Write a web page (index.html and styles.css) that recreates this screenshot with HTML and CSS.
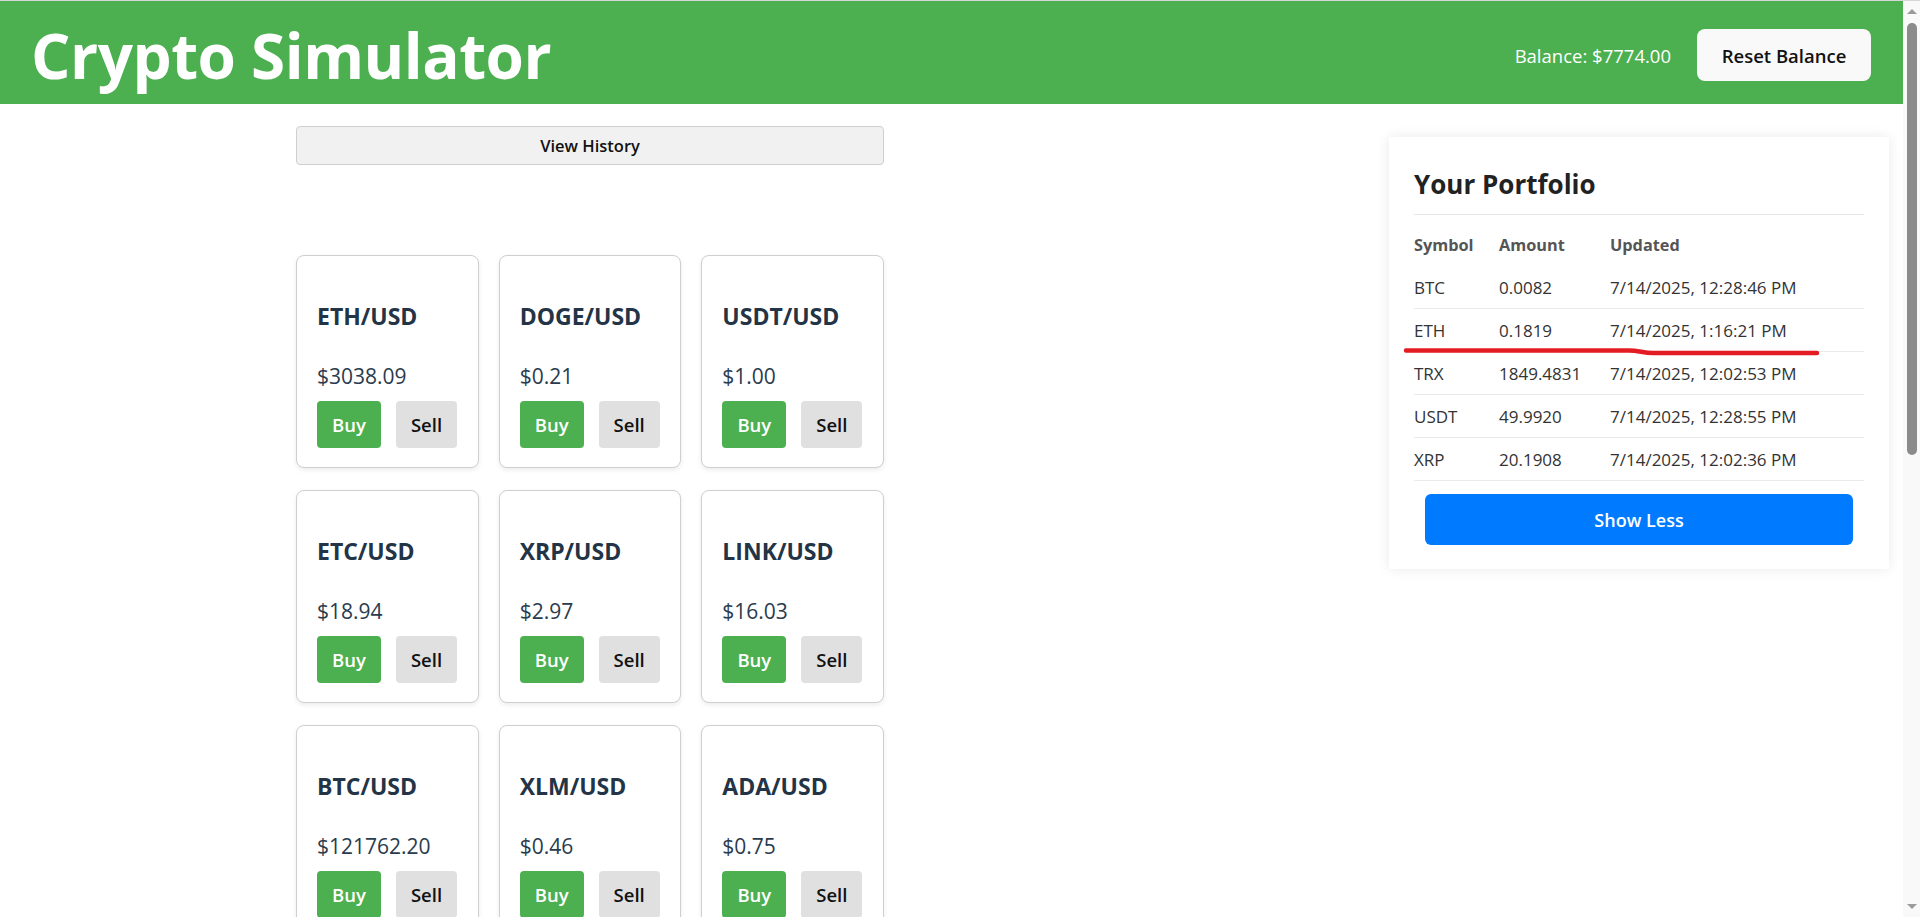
FILE: index.html
```html
<!DOCTYPE html>
<html lang="en">
<head>
<meta charset="utf-8">
<title>Crypto Simulator</title>
<link rel="stylesheet" href="styles.css">
</head>
<body>
<header class="topbar">
  <h1 class="brand">Crypto Simulator</h1>
  <div class="account">
    <span class="balance">Balance: $7774.00</span>
    <button class="reset-btn">Reset Balance</button>
  </div>
</header>

<main class="layout">
  <section class="market">
    <div class="market-inner">
      <button class="history-btn">View History</button>
      <div class="grid">
        <div class="card"><h3 class="pair">ETH/USD</h3><p class="price">$3038.09</p><div class="actions"><button class="buy">Buy</button><button class="sell">Sell</button></div></div>
        <div class="card"><h3 class="pair">DOGE/USD</h3><p class="price">$0.21</p><div class="actions"><button class="buy">Buy</button><button class="sell">Sell</button></div></div>
        <div class="card"><h3 class="pair">USDT/USD</h3><p class="price">$1.00</p><div class="actions"><button class="buy">Buy</button><button class="sell">Sell</button></div></div>
        <div class="card"><h3 class="pair">ETC/USD</h3><p class="price">$18.94</p><div class="actions"><button class="buy">Buy</button><button class="sell">Sell</button></div></div>
        <div class="card"><h3 class="pair">XRP/USD</h3><p class="price">$2.97</p><div class="actions"><button class="buy">Buy</button><button class="sell">Sell</button></div></div>
        <div class="card"><h3 class="pair">LINK/USD</h3><p class="price">$16.03</p><div class="actions"><button class="buy">Buy</button><button class="sell">Sell</button></div></div>
        <div class="card"><h3 class="pair">BTC/USD</h3><p class="price">$121762.20</p><div class="actions"><button class="buy">Buy</button><button class="sell">Sell</button></div></div>
        <div class="card"><h3 class="pair">XLM/USD</h3><p class="price">$0.46</p><div class="actions"><button class="buy">Buy</button><button class="sell">Sell</button></div></div>
        <div class="card"><h3 class="pair">ADA/USD</h3><p class="price">$0.75</p><div class="actions"><button class="buy">Buy</button><button class="sell">Sell</button></div></div>
      </div>
    </div>
  </section>

  <aside class="portfolio">
    <h2 class="portfolio-title">Your Portfolio</h2>
    <table class="holdings">
      <colgroup><col class="c-sym"><col class="c-amt"><col></colgroup>
      <thead>
        <tr><th>Symbol</th><th>Amount</th><th>Updated</th></tr>
      </thead>
      <tbody>
        <tr><td>BTC</td><td>0.0082</td><td>7/14/2025, 12:28:46 PM</td></tr>
        <tr><td>ETH</td><td>0.1819</td><td>7/14/2025, 1:16:21 PM</td></tr>
        <tr><td>TRX</td><td>1849.4831</td><td>7/14/2025, 12:02:53 PM</td></tr>
        <tr><td>USDT</td><td>49.9920</td><td>7/14/2025, 12:28:55 PM</td></tr>
        <tr><td>XRP</td><td>20.1908</td><td>7/14/2025, 12:02:36 PM</td></tr>
      </tbody>
    </table>
    <button class="toggle-btn">Show Less</button>
    <svg class="markup" width="426" height="14" viewBox="0 0 426 14" aria-hidden="true">
      <path d="M3 4.5 L226 4.5 C236 4.5 240 7 250 7 L414 7" fill="none" stroke="#e31b23" stroke-width="4.5" stroke-linecap="round" stroke-linejoin="round"/>
    </svg>
  </aside>
</main>

<div class="scrollbar" aria-hidden="true">
  <span class="sb-up"></span>
  <span class="sb-thumb"></span>
  <span class="sb-track"></span>
  <span class="sb-down"></span>
</div>
</body>
</html>
```

FILE: styles.css
```css
html {
  background: #fff;
}

body {
  margin: 0 17px 0 0;
  border-top: 1px solid #d6d6d6;
  font-family: "Open Sans", "Noto Sans", Arial, sans-serif;
  color: #333;
  background: #fff;
  overflow: hidden;
}

/* Header */
.topbar {
  height: 103px;
  background: #4caf50;
  display: flex;
  align-items: center;
  justify-content: space-between;
  padding: 5px 32px 0 31px;
  box-sizing: border-box;
}

.brand {
  margin: 0;
  color: #fff;
  font-size: 62px;
  font-weight: 700;
  letter-spacing: -0.5px;
  line-height: 1;
}

.account {
  display: flex;
  align-items: center;
  gap: 26px;
}

.balance {
  color: #fff;
  font-size: 18.5px;
}

.reset-btn {
  width: 174px;
  height: 52px;
  border: none;
  border-radius: 8px;
  background: #f9f9f9;
  color: #111;
  font-family: inherit;
  font-size: 18.5px;
  font-weight: 600;
  padding: 0;
}

/* Layout */
.layout {
  display: grid;
  grid-template-columns: 1fr 500px;
  column-gap: 209px;
  padding-right: 14px;
  align-items: start;
}

.market {
  display: flex;
  justify-content: center;
}

.market-inner {
  width: 588px;
  padding-top: 22px;
}

.history-btn {
  display: block;
  width: 100%;
  height: 39px;
  background: #f1f1f1;
  border: 1px solid #cfcfcf;
  border-radius: 4px;
  font-family: inherit;
  font-size: 16.5px;
  font-weight: 600;
  color: #111;
  padding: 0;
}

.grid {
  margin-top: 90px;
  display: grid;
  grid-template-columns: repeat(3, 1fr);
  column-gap: 20px;
  row-gap: 22px;
}

.card {
  height: 213px;
  box-sizing: border-box;
  border: 1px solid #cfcfcf;
  border-radius: 8px;
  background: #fff;
  box-shadow: 0 2px 5px rgba(0, 0, 0, 0.08);
  padding: 20px 20px 19px;
  display: flex;
  flex-direction: column;
}

.pair {
  margin: 26px 0 0;
  font-size: 23px;
  font-weight: 700;
  color: #233447;
  line-height: 28px;
}

.price {
  margin: auto 0 0;
  font-size: 21px;
  color: #2a3b4d;
  line-height: 28px;
}

.actions {
  display: flex;
  gap: 15px;
  margin-top: 11px;
}

.buy,
.sell {
  height: 47px;
  border: none;
  border-radius: 4px;
  font-family: inherit;
  font-size: 18.5px;
  font-weight: 600;
  padding: 0;
}

.buy {
  width: 64px;
  background: #4caf50;
  color: #fff;
}

.sell {
  width: 61px;
  background: #e0e0e0;
  color: #111;
}

/* Portfolio */
.portfolio {
  position: relative;
  margin-top: 33px;
  background: #fff;
  box-shadow: 0 0 12px rgba(0, 0, 0, 0.09);
  padding: 22px 25px 24px;
}

.portfolio-title {
  margin: 0;
  padding: 6px 0 11px;
  font-size: 26px;
  font-weight: 700;
  color: #222;
  line-height: 38px;
  border-bottom: 1px solid #e6e6e6;
}

.holdings {
  width: 100%;
  margin-top: 8px;
  border-collapse: collapse;
  table-layout: fixed;
  font-size: 17px;
}

.c-sym { width: 85px; }
.c-amt { width: 111px; }

.holdings th {
  text-align: left;
  font-size: 16.3px;
  font-weight: 700;
  color: #555;
  height: 43px;
  padding: 0;
}

.holdings td {
  height: 42px;
  padding: 0;
  color: #333;
  border-bottom: 1px solid #eaeaea;
}

.toggle-btn {
  display: block;
  width: 95%;
  height: 51px;
  margin: 13px auto 0;
  background: #007bff;
  color: #fff;
  border: none;
  border-radius: 6px;
  font-family: inherit;
  font-size: 18px;
  font-weight: 600;
  padding: 0;
}

.markup {
  position: absolute;
  left: 14px;
  top: 209px;
}

/* Window scrollbar (drawn over the page edge) */
.scrollbar {
  position: fixed;
  top: 0;
  right: 0;
  width: 17px;
  height: 100vh;
  box-sizing: border-box;
  border-top: 1px solid #d6d6d6;
  background: #f9f9f9;
  display: flex;
  flex-direction: column;
  align-items: center;
}

.sb-up,
.sb-down {
  flex: 0 0 0;
  width: 0;
  height: 0;
  border-left: 5px solid transparent;
  border-right: 5px solid transparent;
}

.sb-up {
  margin-top: 8px;
  border-bottom: 5px solid #9a9a9a;
}

.sb-down {
  margin-bottom: 8px;
  border-top: 5px solid #9a9a9a;
}

.sb-thumb {
  margin-top: 9px;
  width: 10px;
  height: 432px;
  border-radius: 5px;
  background: #8b8b8b;
}

.sb-track {
  flex: 1;
}
```
